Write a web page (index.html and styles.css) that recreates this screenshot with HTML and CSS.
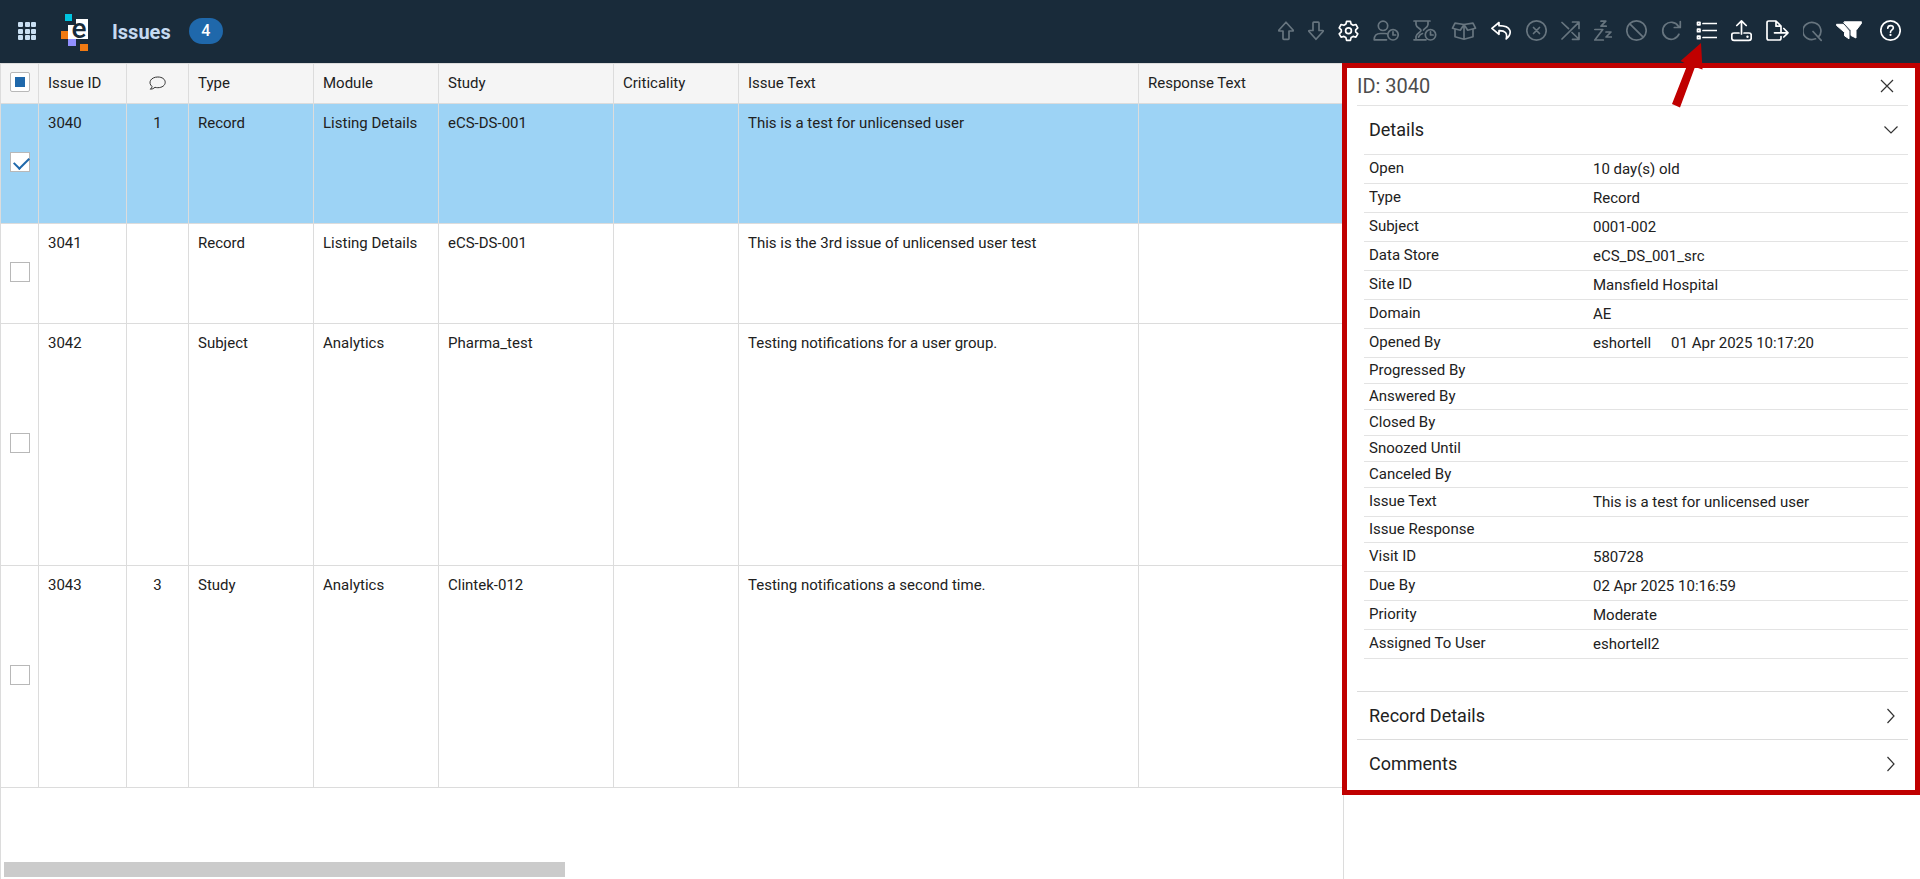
FILE: index.html
```html
<!DOCTYPE html>
<html lang="en">
<head>
<meta charset="utf-8">
<title>Issues</title>
<link rel="stylesheet" href="styles.css">
</head>
<body>
<div class="app">
  <header class="topbar">
    <button class="icon-btn apps" aria-label="Applications">
      <svg width="19" height="19" viewBox="0 0 19 19" fill="currentColor"><rect width="5" height="5" rx="1"/><rect x="7" width="5" height="5" rx="1"/><rect x="13" width="5" height="5" rx="1"/><rect y="7" width="5" height="5" rx="1"/><rect x="7" y="7" width="5" height="5" rx="1"/><rect x="13" y="7" width="5" height="5" rx="1"/><rect y="13" width="5" height="5" rx="1"/><rect x="7" y="13" width="5" height="5" rx="1"/><rect x="13" y="13" width="5" height="5" rx="1"/></svg>
    </button>
    <svg class="logo" width="28" height="38" viewBox="0 0 28 38" role="img" aria-label="Logo">
      <rect x="4" y="0" width="7" height="7" fill="#00c4e0"/>
      <path d="M15 5h12v20H7V11h8z" fill="#fff"/>
      <rect x="0" y="17" width="7" height="8" fill="#f07a13"/>
      <rect x="7" y="25" width="8" height="7" fill="#9290ff"/>
      <rect x="19" y="30" width="8" height="7" fill="#f07a13"/>
      <text x="18" y="24" text-anchor="middle" class="logo-letter">e</text>
    </svg>
    <h1 class="title">Issues</h1>
    <span class="badge">4</span>
    <nav class="tools" aria-label="Issue actions">
      <button class="icon-btn" disabled aria-label="Move up"><svg width="16" height="24" viewBox="0 0 16 24"><path d="M8 3.200 1 11q-.6 1 .5 1H5v7.500q0 .8.8.8h4.400q.8 0 .8-.8V12h3.500q1.100 0 .5-1z"/></svg></button>
      <button class="icon-btn" disabled aria-label="Move down"><svg width="16" height="24" viewBox="0 0 16 24"><path d="M8 20.300 1 12.500q-.6-1 .5-1H5V4q0-.8.8-.8h4.400q.8 0 .8.800v7.500h3.500q1.100 0 .5 1z"/></svg></button>
      <button class="icon-btn" aria-label="Settings"><svg width="21" height="24" viewBox="0 0 21 24"><path d="M8.600 2.300h3.800l.7 2.800 2 1.200 2.800-.8 1.900 3.300-2.100 2v2.100l2.100 2-1.900 3.300-2.800-.8-2 1.200-.7 2.800H8.600l-.7-2.800-2-1.200-2.800.8-1.900-3.300 2.100-2v-2.100l-2.100-2 1.900-3.300 2.800.8 2-1.200z"/><circle cx="10.500" cy="11.800" r="2.900"/></svg></button>
      <button class="icon-btn" disabled aria-label="Assign user"><svg width="26" height="24" viewBox="0 0 26 24"><circle cx="10" cy="6.800" r="4.700"/><path d="M13.500 20.800H1.200c0-4.800 3-6.300 6.300-6.300h4.500q1 0 2 .3"/><circle cx="20" cy="15.800" r="5.200"/><path d="M20 12.800v3.200h2.600"/></svg></button>
      <button class="icon-btn" disabled aria-label="Due time"><svg width="24" height="24" viewBox="0 0 24 24"><path d="M1 2h16M1 20.800h12M3 2v3.500c0 3 5 4.200 5 6s-5 3-5 6v3.300M15 2v3.500c0 2.600-3.500 4-4.500 5.500M5.500 18q1.500-3 4-3.500"/><circle cx="17.500" cy="15.800" r="5.200"/><path d="M17.500 12.800v3.200h2.600"/></svg></button>
      <button class="icon-btn" disabled aria-label="Package"><svg width="26" height="24" viewBox="0 0 26 24"><path d="M4 4.200 13 5.500l9-1.300 2.500 5-7.800 2L13 5.500l-3.700 5.700-7.800-2zM4 10.500v7.300l9 2.400 9-2.400v-7.300M13 5.500v14.700"/></svg></button>
      <button class="icon-btn" aria-label="Undo"><svg width="21" height="24" viewBox="0 0 21 24"><path d="M8 3.500.9 9.300l7.100 6v-3.600c6-.2 8.800 2.300 7.200 8.300 6.500-6 5.500-13-7.200-13.300z"/></svg></button>
      <button class="icon-btn" disabled aria-label="Close issue"><svg width="21" height="24" viewBox="0 0 21 24"><circle cx="10.500" cy="11.500" r="9.700"/><path d="m7.500 8.500 6 6m0-6-6 6"/></svg></button>
      <button class="icon-btn" disabled aria-label="Reassign"><svg width="19" height="24" viewBox="0 0 19 24"><path d="M1 20 17.800 3.300M11.500 3h6.500v6.500M1 3.500l6.500 6.200M11 13.500l6.800 6.500M11.500 20.300h6.500v-6.500"/></svg></button>
      <button class="icon-btn" disabled aria-label="Snooze"><svg width="18" height="24" viewBox="0 0 18 24"><path d="M7 2.200h4.800l-4.800 5h5.200M.8 10.500h8l-8 10.500h8.500M12 13h5l-5 5h5.500"/></svg></button>
      <button class="icon-btn" disabled aria-label="Cancel issue"><svg width="21" height="24" viewBox="0 0 21 24"><circle cx="10.500" cy="11.500" r="9.700"/><path d="m3.800 4.800 13.400 13.400"/></svg></button>
      <button class="icon-btn" disabled aria-label="Refresh"><svg width="21" height="24" viewBox="0 0 21 24"><path d="M18 15.200a8.500 8.500 0 1 1-.6-8L19 8.300M19.300 2.500v6h-6"/></svg></button>
      <button class="icon-btn" aria-label="Details list"><svg width="21" height="24" viewBox="0 0 21 24"><path d="M7 4.500h13.500M7 11.500h13.500M7 18.500h13.500"/><rect x="1.500" y="3.300" width="2.500" height="2.500"/><rect x="1.500" y="10.200" width="2.500" height="2.500"/><rect x="1.500" y="17.200" width="2.500" height="2.500"/></svg></button>
      <button class="icon-btn" aria-label="Upload"><svg width="21" height="24" viewBox="0 0 21 24"><path d="M10.500 15V2M5.800 6.500l4.700-4.700 4.700 4.700M8 14H3q-2.200 0-2.200 2v3.300q0 2 2.200 2h15q2.200 0 2.200-2V16q0-2-2.200-2h-5"/><circle class="dot" cx="16.500" cy="17.700" r="1.200"/></svg></button>
      <button class="icon-btn" aria-label="Export file"><svg width="23" height="24" viewBox="0 0 23 24"><path d="M15 17.500v1.800q0 1.700-1.800 1.700H2.800Q1 21 1 19.300V3.700Q1 2 2.800 2H10l5 5v6.500M10 2v5.200h5M8.500 13.800h13.500M17.800 9.500l4.200 4.300-4.200 4.200"/></svg></button>
      <button class="icon-btn" disabled aria-label="Query"><svg width="19" height="24" viewBox="0 0 19 24"><path d="M12.500 19.800a9 8.500 0 1 1 3-2M10 12.500l8.200 8.800"/></svg></button>
      <button class="icon-btn" aria-label="Filter"><svg width="26" height="24" viewBox="0 0 26 24"><path class="solid" d="M8.500 2.800H25.500q.6.800 0 1.500L20 11.500v7.500l-5-2.500v-5L8 4z"/><path class="solid" d="M.8 5.300h6.500l5.700 6.500v8l-4.500-3v-3.500L.6 6.500z"/></svg></button>
      <button class="icon-btn help" aria-label="Help"><svg width="21" height="24" viewBox="0 0 21 24"><circle cx="10.500" cy="11.500" r="9.700"/><path d="M7.800 9.200q.1-2.600 2.800-2.600t2.700 2.300c0 2-2.800 2-2.800 4.300"/><circle class="dot" cx="10.500" cy="15.900" r="1.100"/></svg></button>
    </nav>
  </header>

  <main class="content">
    <section class="grid-area" aria-label="Issues">
      <table class="grid">
        <colgroup><col class="c-check"><col class="c-id"><col class="c-count"><col class="c-std"><col class="c-std"><col class="c-study"><col class="c-std"><col class="c-text"><col></colgroup>
        <thead>
          <tr>
            <th class="check"><input type="checkbox" class="box mixed" aria-label="Select all issues"></th>
            <th>Issue ID</th>
            <th class="count"><svg width="18" height="15" viewBox="0 0 18 15" role="img" aria-label="Comments"><path d="M3 10.500C-1.500 6.500 2 1 8.800 1c4.500 0 7.400 2.300 7.400 5.300s-3 5.400-7.400 5.400q-1.500 0-2.800-.4Q4 13.300 1.300 13.200 3 12 3 10.500z"/></svg></th>
            <th>Type</th><th>Module</th><th>Study</th><th>Criticality</th><th>Issue Text</th><th>Response Text</th>
          </tr>
        </thead>
        <tbody>
          <tr class="selected h-120"><td class="check"><input type="checkbox" class="box" checked aria-label="Select issue 3040"></td><td>3040</td><td class="count">1</td><td>Record</td><td>Listing Details</td><td>eCS-DS-001</td><td></td><td>This is a test for unlicensed user</td><td></td></tr>
          <tr class="h-100"><td class="check"><input type="checkbox" class="box" aria-label="Select issue 3041"></td><td>3041</td><td class="count"></td><td>Record</td><td>Listing Details</td><td>eCS-DS-001</td><td></td><td>This is the 3rd issue of unlicensed user test</td><td></td></tr>
          <tr class="h-242"><td class="check"><input type="checkbox" class="box" aria-label="Select issue 3042"></td><td>3042</td><td class="count"></td><td>Subject</td><td>Analytics</td><td>Pharma_test</td><td></td><td>Testing notifications for a user group.</td><td></td></tr>
          <tr class="h-222"><td class="check"><input type="checkbox" class="box" aria-label="Select issue 3043"></td><td>3043</td><td class="count">3</td><td>Study</td><td>Analytics</td><td>Clintek-012</td><td></td><td>Testing notifications a second time.</td><td></td></tr>
        </tbody>
      </table>
      <div class="scroll-track"><div class="scroll-thumb"></div></div>
    </section>

    <aside class="side">
      <div class="panel">
        <div class="panel-head">
          <h2>ID: 3040</h2>
          <button class="icon-btn close" aria-label="Close panel"><svg width="14" height="14" viewBox="0 0 14 14"><path d="m1 1 12 12M13 1 1 13"/></svg></button>
        </div>
        <button class="section-head open" aria-expanded="true">Details<svg width="16" height="16" viewBox="0 0 16 16"><path d="m1.500 4.500 6.500 6.500 6.500-6.500"/></svg></button>
        <dl class="details">
          <div><dt>Open</dt><dd>10 day(s) old</dd></div>
          <div><dt>Type</dt><dd>Record</dd></div>
          <div><dt>Subject</dt><dd>0001-002</dd></div>
          <div><dt>Data Store</dt><dd>eCS_DS_001_src</dd></div>
          <div><dt>Site ID</dt><dd>Mansfield Hospital</dd></div>
          <div><dt>Domain</dt><dd>AE</dd></div>
          <div><dt>Opened By</dt><dd><span>eshortell</span><span>01 Apr 2025 10:17:20</span></dd></div>
          <div class="empty"><dt>Progressed By</dt><dd></dd></div>
          <div class="empty"><dt>Answered By</dt><dd></dd></div>
          <div class="empty"><dt>Closed By</dt><dd></dd></div>
          <div class="empty"><dt>Snoozed Until</dt><dd></dd></div>
          <div class="empty"><dt>Canceled By</dt><dd></dd></div>
          <div><dt>Issue Text</dt><dd>This is a test for unlicensed user</dd></div>
          <div class="empty"><dt>Issue Response</dt><dd></dd></div>
          <div><dt>Visit ID</dt><dd>580728</dd></div>
          <div><dt>Due By</dt><dd>02 Apr 2025 10:16:59</dd></div>
          <div><dt>Priority</dt><dd>Moderate</dd></div>
          <div><dt>Assigned To User</dt><dd>eshortell2</dd></div>
        </dl>
        <button class="section-head" aria-expanded="false">Record Details<svg width="16" height="16" viewBox="0 0 16 16"><path d="m4.500 1 6.500 7-6.500 7"/></svg></button>
        <button class="section-head" aria-expanded="false">Comments<svg width="16" height="16" viewBox="0 0 16 16"><path d="m4.500 1 6.500 7-6.500 7"/></svg></button>
      </div>
    </aside>
  </main>
  <svg class="pointer" width="34" height="66" viewBox="0 0 34 66" aria-hidden="true"><path d="M31 1l1.500 26.500L25 25 10 65.500 2 62 17.500 22.500 10.500 19z"/></svg>
</div>
</body>
</html>
```

FILE: styles.css
```css
* { box-sizing: border-box; }

body {
  margin: 0;
  font: 15px/20px Roboto, sans-serif;
  color: #212121;
  background: #fff;
}

h1, h2, dl, dd { margin: 0; }

.app {
  position: relative;
  display: flex;
  flex-direction: column;
  height: 100vh;
  overflow: hidden;
}

/* Top bar */
.topbar {
  display: flex;
  align-items: center;
  flex: none;
  height: 63px;
  padding: 0 19px 1px 18px;
  background: #192b3a;
}

.icon-btn {
  display: flex;
  padding: 0;
  border: 0;
  background: none;
  color: #fff;
}

.icon-btn:disabled { color: #67757f; }

.apps { color: #c9dff2; }

.logo {
  margin: 3px 23px 0 24px;
  overflow: visible;
}

.logo-letter {
  font: 500 28px Roboto, sans-serif;
  fill: #192b3a;
}

.title {
  padding-top: 2px;
  font-size: 20px;
  line-height: 26px;
  font-weight: 700;
  color: #c5daf1;
}

.badge {
  width: 34px;
  margin-left: 18px;
  border-radius: 13px;
  background: #1f68ab;
  color: #fff;
  font-size: 16px;
  line-height: 26px;
  font-weight: 500;
  text-align: center;
}

.tools {
  display: flex;
  gap: 14px;
  margin-left: auto;
}

.help { margin-left: 4px; }

.tools svg {
  fill: none;
  stroke: currentColor;
  stroke-width: 1.7;
  stroke-linecap: round;
  stroke-linejoin: round;
}

.tools .dot {
  fill: currentColor;
  stroke: none;
}

.tools .solid {
  fill: currentColor;
  stroke-width: 1;
}

/* Issue grid */
.content {
  display: flex;
  flex: 1;
  min-height: 0;
}

.grid-area {
  display: flex;
  flex-direction: column;
  flex: 1;
  min-width: 0;
  border-top: 1px solid #dcdcdc;
  border-left: 1px solid #dcdcdc;
}

.grid {
  width: 100%;
  table-layout: fixed;
  border-collapse: separate;
  border-spacing: 0;
}

.c-check { width: 38px; }
.c-id { width: 88px; }
.c-count { width: 62px; }
.c-std { width: 125px; }
.c-study { width: 175px; }
.c-text { width: 400px; }

.grid th,
.grid td {
  padding: 9px;
  border-right: 1px solid #dcdcdc;
  border-bottom: 1px solid #dcdcdc;
  font-weight: 400;
  text-align: left;
  vertical-align: top;
}

.grid th:last-child,
.grid td:last-child { border-right: 0; }

.grid th {
  height: 40px;
  background: #f5f5f5;
}

.grid .count { text-align: center; }

.grid .check {
  padding: 0 0 3px 9px;
  vertical-align: middle;
}

.count svg {
  display: block;
  margin: 3px auto 0;
  fill: none;
  stroke: #333;
}

.selected { background: #9dd3f5; }
.h-120 { height: 120px; }
.h-100 { height: 100px; }
.h-242 { height: 242px; }
.h-222 { height: 222px; }

.box {
  display: block;
  appearance: none;
  width: 20px;
  height: 20px;
  margin: 0;
  border: 1px solid #b8b8b8;
  background: #fff;
}

.box:checked::after {
  content: "";
  display: block;
  width: 13px;
  height: 7px;
  margin: 4px 3px;
  border: solid #1f68ab;
  border-width: 0 0 2px 2px;
  transform: rotate(-45deg);
}

.mixed {
  border-radius: 2px;
  background: linear-gradient(#1f68ab, #1f68ab) center / 10px 10px no-repeat #fff;
}

.scroll-track {
  margin-top: auto;
  padding: 0 3px 2px;
}

.scroll-thumb {
  width: 42%;
  height: 15px;
  background: #cbcbcb;
}

/* Details panel */
.side {
  flex: none;
  width: 577px;
  border-left: 1px solid #dcdcdc;
}

.panel {
  margin-left: -2px;
  padding: 0 7px 3px 10px;
  border: 5px solid #c00000;
  background: #fff;
}

.panel-head {
  display: flex;
  align-items: center;
  justify-content: space-between;
  height: 38px;
  padding: 0 14px 2px 0;
  border-bottom: 1px solid #e3e3e3;
}

.panel-head h2 {
  font-size: 20px;
  line-height: 24px;
  font-weight: 400;
  color: #4d4d4d;
}

.panel svg {
  fill: none;
  stroke: #333;
  stroke-width: 1.2;
}

.section-head {
  display: flex;
  align-items: center;
  justify-content: space-between;
  width: 100%;
  height: 48px;
  padding: 0 9px 0 12px;
  border: 0;
  border-top: 1px solid #dcdcdc;
  background: none;
  color: #212121;
  font: 18px/24px Roboto, sans-serif;
}

.open { border-top: 0; }

.details {
  margin: 0 0 32px 7px;
  border-top: 1px solid #e3e3e3;
}

.details div {
  display: grid;
  grid-template-columns: 41% 1fr;
  height: 29px;
  padding-left: 5px;
  border-bottom: 1px solid #e3e3e3;
}

.details dt { padding-top: 3px; }

.details dd {
  display: flex;
  gap: 20px;
  padding: 4px 0 0 3px;
}

.details .empty { height: 26px; }

.empty dt { padding-top: 2px; }

/* Arrow over the bar and the panel */
.pointer {
  position: absolute;
  top: 42px;
  right: 216px;
  fill: #c00000;
}
```
